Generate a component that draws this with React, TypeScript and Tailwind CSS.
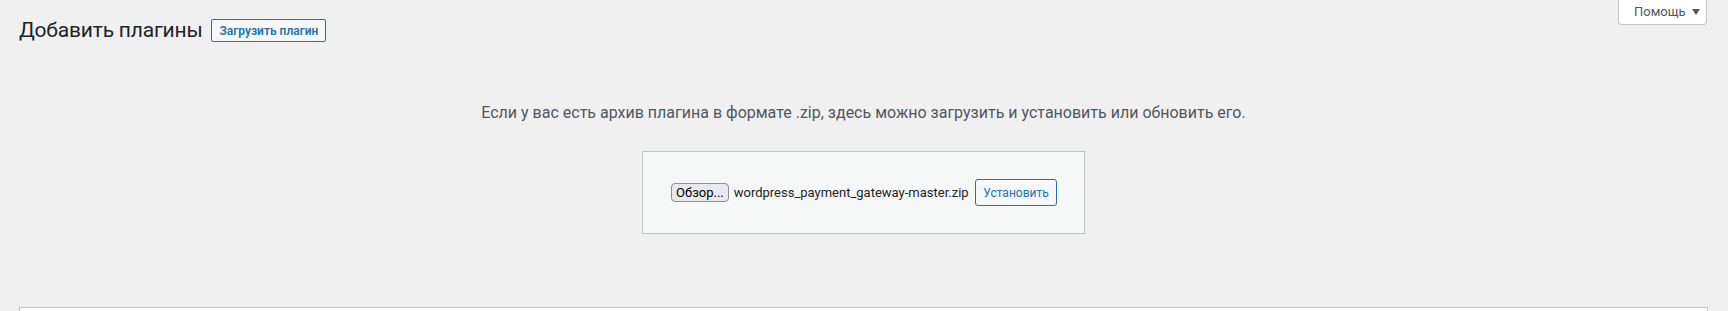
export default function App() {
  return (
    <div className="relative w-full h-[311px] overflow-hidden bg-[#f0f0f1] font-['Roboto',sans-serif] text-[#1d2327]">
      {/* вкладка "Помощь" */}
      <div className="absolute top-0 right-[21px]">
        <button className="flex items-center gap-[5px] h-[25px] w-[89px] pl-[15px] bg-white border border-t-0 border-[#c3c4c7] rounded-b-[4px] text-[13px] text-[#50575e]">
          Помощь
          <svg width="8" height="6" viewBox="0 0 8 6" className="ml-[1px]">
            <path d="M0 0 L8 0 L4 6 Z" fill="#50575e" />
          </svg>
        </button>
      </div>

      <div className="pl-[19px] pr-[20px]">
        <div className="flex items-center gap-[9px] pt-[19px]">
          <h1 className="text-[21px] leading-[23px] tracking-[-0.2px] font-normal text-[#1d2327]">Добавить плагины</h1>
          <button className="h-[23px] px-[7px] border border-[#2271b1] rounded-[2px] bg-[#f6f7f7] text-[12px] font-semibold text-[#2271b1]">
            Загрузить плагин
          </button>
        </div>

        <div className="flex flex-col items-center">
          <p className="mt-[59px] text-[16px] leading-[24px] text-[#50575e]">
            Если у вас есть архив плагина в формате .zip, здесь можно загрузить и установить или обновить его.
          </p>

          <form className="mt-[26px] flex items-center w-[443px] h-[83px] pl-[28px] pr-[27px] bg-[#f6f7f7] border border-[#c3c4c7]">
            <button type="button" className="h-[19px] px-[4px] bg-[#e9e9ed] border border-[#8f8f9d] rounded-[4px] text-[13px] leading-[17px] text-black">
              Обзор...
            </button>
            <span className="ml-[5px] text-[13px] text-[#1d2327]">wordpress_payment_gateway-master.zip</span>
            <button type="button" className="ml-auto h-[27px] w-[82px] border border-[#2271b1] rounded-[3px] bg-[#f6f7f7] text-[12px] text-[#2271b1]">
              Установить
            </button>
          </form>
        </div>

        <div className="mt-[73px] h-[40px] bg-white border border-[#c3c4c7]" />
      </div>
    </div>
  );
}
